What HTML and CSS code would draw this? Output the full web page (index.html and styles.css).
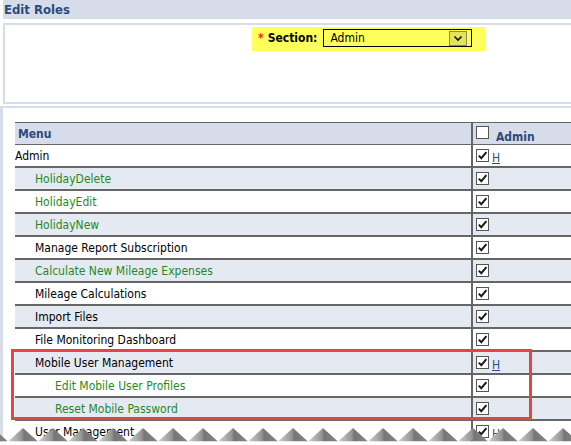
FILE: index.html
```html
<!DOCTYPE html>
<html>
<head>
<meta charset="utf-8">
<link rel="stylesheet" href="styles.css">
</head>
<body>
<div class="titlebar">Edit Roles</div>
<div class="panel filter">
  <div class="section">
    <span class="req">*</span>
    <span class="lbl">Section:</span>
    <div class="select">
      <span class="val">Admin</span>
      <span class="btn"><svg width="10" height="7" viewBox="0 0 10 7"><path d="M1.5 1.5 L5 5 L8.5 1.5" fill="none" stroke="#111" stroke-width="1.6"/></svg></span>
    </div>
  </div>
</div>
<div class="panel main">
  <table class="roles">
    <thead>
      <tr><th class="menu">Menu</th><th class="perm"><span class="cb"></span><span class="hname">Admin</span></th></tr>
    </thead>
    <tbody>
      <tr><td class="menu">Admin</td><td class="perm"><span class="cb on"><svg viewBox="0 0 11 11"><path d="M1.8 5.6 L4.3 8.2 L9.4 2.2" fill="none" stroke="#1a1a1a" stroke-width="2"/></svg></span><a class="h">H</a></td></tr>
      <tr class="alt"><td class="menu l1 sub">HolidayDelete</td><td class="perm"><span class="cb on"><svg viewBox="0 0 11 11"><path d="M1.8 5.6 L4.3 8.2 L9.4 2.2" fill="none" stroke="#1a1a1a" stroke-width="2"/></svg></span></td></tr>
      <tr><td class="menu l1 sub">HolidayEdit</td><td class="perm"><span class="cb on"><svg viewBox="0 0 11 11"><path d="M1.8 5.6 L4.3 8.2 L9.4 2.2" fill="none" stroke="#1a1a1a" stroke-width="2"/></svg></span></td></tr>
      <tr class="alt"><td class="menu l1 sub">HolidayNew</td><td class="perm"><span class="cb on"><svg viewBox="0 0 11 11"><path d="M1.8 5.6 L4.3 8.2 L9.4 2.2" fill="none" stroke="#1a1a1a" stroke-width="2"/></svg></span></td></tr>
      <tr><td class="menu l1">Manage Report Subscription</td><td class="perm"><span class="cb on"><svg viewBox="0 0 11 11"><path d="M1.8 5.6 L4.3 8.2 L9.4 2.2" fill="none" stroke="#1a1a1a" stroke-width="2"/></svg></span></td></tr>
      <tr class="alt"><td class="menu l1 sub">Calculate New Mileage Expenses</td><td class="perm"><span class="cb on"><svg viewBox="0 0 11 11"><path d="M1.8 5.6 L4.3 8.2 L9.4 2.2" fill="none" stroke="#1a1a1a" stroke-width="2"/></svg></span></td></tr>
      <tr><td class="menu l1">Mileage Calculations</td><td class="perm"><span class="cb on"><svg viewBox="0 0 11 11"><path d="M1.8 5.6 L4.3 8.2 L9.4 2.2" fill="none" stroke="#1a1a1a" stroke-width="2"/></svg></span></td></tr>
      <tr class="alt"><td class="menu l1">Import Files</td><td class="perm"><span class="cb on"><svg viewBox="0 0 11 11"><path d="M1.8 5.6 L4.3 8.2 L9.4 2.2" fill="none" stroke="#1a1a1a" stroke-width="2"/></svg></span></td></tr>
      <tr><td class="menu l1">File Monitoring Dashboard</td><td class="perm"><span class="cb on"><svg viewBox="0 0 11 11"><path d="M1.8 5.6 L4.3 8.2 L9.4 2.2" fill="none" stroke="#1a1a1a" stroke-width="2"/></svg></span></td></tr>
      <tr class="alt"><td class="menu l1">Mobile User Management</td><td class="perm"><span class="cb on"><svg viewBox="0 0 11 11"><path d="M1.8 5.6 L4.3 8.2 L9.4 2.2" fill="none" stroke="#1a1a1a" stroke-width="2"/></svg></span><a class="h">H</a></td></tr>
      <tr><td class="menu l2 sub">Edit Mobile User Profiles</td><td class="perm"><span class="cb on"><svg viewBox="0 0 11 11"><path d="M1.8 5.6 L4.3 8.2 L9.4 2.2" fill="none" stroke="#1a1a1a" stroke-width="2"/></svg></span></td></tr>
      <tr class="alt"><td class="menu l2 sub">Reset Mobile Password</td><td class="perm"><span class="cb on"><svg viewBox="0 0 11 11"><path d="M1.8 5.6 L4.3 8.2 L9.4 2.2" fill="none" stroke="#1a1a1a" stroke-width="2"/></svg></span></td></tr>
      <tr><td class="menu l1">User Management</td><td class="perm"><span class="cb on"><svg viewBox="0 0 11 11"><path d="M1.8 5.6 L4.3 8.2 L9.4 2.2" fill="none" stroke="#1a1a1a" stroke-width="2"/></svg></span><a class="h">H</a></td></tr>
    </tbody>
  </table>
</div>
<div class="highlight"></div>
<div class="torn">
  <svg width="571" height="20" viewBox="0 0 571 20">
    <defs>
      <linearGradient id="tg" x1="0" y1="0" x2="1" y2="0">
        <stop offset="0" stop-color="#d0d0d0"/>
        <stop offset="0.45" stop-color="#959595"/>
        <stop offset="0.55" stop-color="#767676"/>
        <stop offset="1" stop-color="#868686"/>
      </linearGradient>
      <pattern id="tp" x="8" y="0" width="30" height="20" patternUnits="userSpaceOnUse">
        <polygon points="0,16.5 15,3 30,16.5" fill="url(#tg)"/>
      </pattern>
    </defs>
    <rect x="0" y="0" width="571" height="20" fill="url(#tp)"/>
    <rect x="0" y="16.5" width="571" height="3.5" fill="#fff"/>
  </svg>
</div>
</body>
</html>
```

FILE: styles.css
```css
html, body {
  margin: 0;
  padding: 0;
  background: #fff;
  overflow: hidden;
}
body {
  width: 571px;
  height: 445px;
  position: relative;
  font-family: "DejaVu Sans Condensed", "DejaVu Sans", sans-serif;
  font-stretch: condensed;
  font-size: 12px;
  color: #000;
}
.titlebar {
  margin-left: 3px;
  height: 19px;
  line-height: 19px;
  padding-left: 1px;
  background: #d6dce9;
  color: #2c4a7c;
  font-weight: bold;
  font-size: 13px;
}
.panel {
  box-sizing: border-box;
}
.filter {
  margin-top: 4px;
  margin-left: 3px;
  height: 81px;
  border-top: 2px solid #d6dce9;
  border-left: 2px solid #d6dce9;
  border-bottom: 2px solid #d6dce9;
  padding: 2px 0 0 247px;
}
.section {
  display: flex;
  align-items: flex-start;
  box-sizing: border-box;
  width: 233px;
  height: 24px;
  padding-top: 2px;
  background: #ffff5c;
}
.req {
  color: #ff1a1a;
  font-weight: bold;
  margin-left: 6px;
  line-height: 18px;
  font-size: 12px;
}
.lbl {
  font-weight: bold;
  margin-left: 4px;
  line-height: 18px;
}
.select {
  display: flex;
  align-items: center;
  justify-content: space-between;
  box-sizing: border-box;
  width: 149px;
  height: 18px;
  margin-left: 6px;
  border: 1px solid #000;
  padding-left: 6px;
}
.val {
  line-height: 16px;
}
.btn {
  display: flex;
  align-items: center;
  justify-content: center;
  box-sizing: border-box;
  width: 18px;
  height: 15px;
  margin-right: 4px;
  background: #e4e45a;
  border: 1px solid #8a8a5a;
}
.main {
  margin-top: 2px;
  height: 400px;
  border-top: 2px solid #d6dce9;
  border-left: 3px solid #d6dce9;
  padding: 14px 0 0 12px;
}
.roles {
  border-collapse: separate;
  border-spacing: 0;
  width: 720px;
}
.roles th {
  box-sizing: border-box;
  height: 23px;
  background: #d6dce9;
  border-top: 1px solid #666;
  border-bottom: 1px solid #666;
  text-align: left;
  color: #2c4a7c;
  font-weight: bold;
  font-size: 12px;
  padding: 0 3px;
  vertical-align: middle;
}
.roles td {
  box-sizing: border-box;
  height: 23px;
  padding: 0;
  border-bottom: 2px solid #666;
  vertical-align: middle;
  white-space: nowrap;
}
.roles .menu {
  width: 458px;
  border-right: 2px solid #666;
}
.roles td.menu {
  padding-left: 0;
}
.roles td.l1 {
  padding-left: 20px;
}
.roles td.l2 {
  padding-left: 40px;
}
.roles td.sub {
  color: #1f8a1f;
}
.roles tr.alt td {
  background: #e5e9f2;
}
.roles .perm {
  padding-left: 3px;
}
.roles td.perm {
  padding-left: 3px;
  padding-top: 1px;
}
.cb {
  display: inline-block;
  box-sizing: border-box;
  width: 13px;
  height: 13px;
  border: 1px solid #555;
  background: #fff;
  vertical-align: middle;
  position: relative;
  top: -1px;
}
.cb svg {
  display: block;
  width: 11px;
  height: 11px;
}
.hname {
  margin-left: 7px;
  vertical-align: middle;
  position: relative;
  top: 3px;
}
.h {
  margin-left: 3px;
  color: #2b4c8c;
  text-decoration: underline;
  vertical-align: middle;
  position: relative;
  top: 2px;
}
.highlight {
  position: absolute;
  left: 11px;
  top: 349px;
  width: 521px;
  height: 71px;
  box-sizing: border-box;
  border: 3px solid #e5453d;
}
.torn {
  position: absolute;
  left: 0;
  bottom: 0;
  width: 571px;
  height: 20px;
}
.torn svg {
  display: block;
}
```
